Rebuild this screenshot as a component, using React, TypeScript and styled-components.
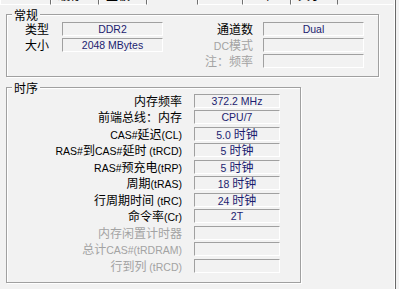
import { Fragment } from "react";
import styled, { createGlobalStyle } from "styled-components";

const GlobalStyle = createGlobalStyle`
  html, body {
    margin: 0;
    padding: 0;
    background: #f2f2f2;
  }
  body {
    font-family: "Liberation Sans", "Noto Sans CJK SC", sans-serif;
    font-size: 12px;
    color: #000;
  }
`;

const Window = styled.div`
  width: 396px;
  height: 289px;
  box-sizing: border-box;
  border-right: 1px solid #696969;
  box-shadow: inset -1px 0 0 #fff;
  display: flex;
  flex-direction: column;
  overflow: hidden;
`;

const TabStrip = styled.div`
  display: flex;
  height: 5px;
  flex: none;
  overflow: hidden;
  margin-right: 2px;
`;

const Tab = styled.div<{ $w: number; $active?: boolean }>`
  width: ${(p) => p.$w}px;
  flex: none;
  box-sizing: border-box;
  border-left: 1px solid #fff;
  border-right: 1px solid #707070;
  border-bottom: 1px solid ${(p) => (p.$active ? "transparent" : "#fff")};
  overflow: hidden;
`;

const TabFill = styled.div`
  flex: 1;
  border-bottom: 1px solid #fff;
`;

// only the lower edge of the tab captions is left in view
const TabLabel = styled.span<{ $active?: boolean }>`
  display: block;
  padding-left: 6px;
  font-family: "Noto Sans CJK SC", sans-serif;
  font-size: 12px;
  line-height: 12px;
  margin-top: ${(p) => (p.$active ? -16 : -11)}px;
  white-space: nowrap;
`;

const Group = styled.fieldset<{ $w: number; $top: number; $bottom: number }>`
  margin: ${(p) => p.$top}px 0 0 6px;
  padding: 0 0 ${(p) => p.$bottom}px 0;
  width: ${(p) => p.$w}px;
  min-width: 0;
  box-sizing: border-box;
  border: 1px solid #a0a0a0;
  box-shadow: 1px 1px 0 #fff, inset 1px 1px 0 #fff;
  flex: none;
`;

const Legend = styled.legend`
  margin-left: 5px;
  padding: 0 2px;
  font-family: "Noto Sans CJK SC", sans-serif;
  font-size: 12px;
  line-height: 13px;
  background: #f2f2f2;
`;

const GeneralGrid = styled.div`
  display: grid;
  grid-template-columns: 55px 101px 100px 101px;
  grid-auto-rows: 14px;
  row-gap: 2px;
  padding-top: 1px;
`;

const TimingGrid = styled.div`
  display: grid;
  grid-template-columns: 187px 86px;
  grid-template-rows: repeat(5, 16px 17px) 16px;
  align-items: start;
`;

const Label = styled.div<{ $gap: number; $off?: boolean }>`
  padding-right: ${(p) => p.$gap}px;
  text-align: right;
  line-height: 14px;
  height: 14px;
  white-space: nowrap;
  color: ${(p) => (p.$off ? "#a3a3a3" : "#000")};
`;

const Field = styled.div`
  height: 14px;
  box-sizing: border-box;
  border-top: 1px solid #a0a0a0;
  border-left: 1px solid #a0a0a0;
  border-bottom: 1px solid #fff;
  border-right: 1px solid #fff;
  text-align: center;
  line-height: 12px;
  color: #1c1c70;
  white-space: nowrap;
  overflow: hidden;
`;

const Han = styled.span`
  font-family: "Noto Sans CJK SC", sans-serif;
  font-size: 12px;
`;

const Latin = styled.span`
  font-size: 10.5px;
`;

const CJK = /([\u3000-\u9fff\uff00-\uffef]+)/;

function Mixed({ text }: { text: string }) {
  return (
    <>
      {text
        .split(CJK)
        .filter(Boolean)
        .map((part, i) =>
          CJK.test(part) ? <Han key={i}>{part}</Han> : <Latin key={i}>{part}</Latin>
        )}
    </>
  );
}

const tabs = [
  { label: "CPU", w: 51 },
  { label: "缓存", w: 48 },
  { label: "主板", w: 48 },
  { label: "内存", w: 51, active: true },
  { label: "SPD", w: 45 },
  { label: "显卡", w: 48 },
  { label: "关于", w: 47 },
];

const general = [
  { l: "类型", v: "DDR2", r: "通道数", rv: "Dual" },
  { l: "大小", v: "2048 MBytes", r: "DC模式", rv: "", roff: true },
  { l: "", v: null, r: "注：频率", rv: "", roff: true },
];

const timings = [
  { l: "内存频率", v: "372.2 MHz" },
  { l: "前端总线：内存", v: "CPU/7" },
  { l: "CAS#延迟(CL)", v: "5.0 时钟" },
  { l: "RAS#到CAS#延时 (tRCD)", v: "5 时钟" },
  { l: "RAS#预充电(tRP)", v: "5 时钟" },
  { l: "周期(tRAS)", v: "18 时钟" },
  { l: "行周期时间 (tRC)", v: "24 时钟" },
  { l: "命令率(Cr)", v: "2T" },
  { l: "内存闲置计时器", v: "", off: true },
  { l: "总计CAS#(tRDRAM)", v: "", off: true },
  { l: "行到列 (tRCD)", v: "", off: true },
];

export default function App() {
  return (
    <>
      <GlobalStyle />
      <Window>
        <TabStrip>
          {tabs.map((t) => (
            <Tab key={t.label} $w={t.w} $active={t.active}>
              <TabLabel $active={t.active}>{t.label}</TabLabel>
            </Tab>
          ))}
          <TabFill />
        </TabStrip>

        <Group $w={373} $top={3} $bottom={8}>
          <Legend>常规</Legend>
          <GeneralGrid>
            {general.map((row, i) => (
              <Fragment key={i}>
                <Label $gap={13}>
                  <Mixed text={row.l} />
                </Label>
                {row.v === null ? (
                  <div />
                ) : (
                  <Field>
                    <Mixed text={row.v} />
                  </Field>
                )}
                <Label $gap={10} $off={row.roff}>
                  <Mixed text={row.r} />
                </Label>
                <Field>
                  <Mixed text={row.rv} />
                </Field>
              </Fragment>
            ))}
          </GeneralGrid>
        </Group>

        <Group $w={295} $top={4} $bottom={7}>
          <Legend>时序</Legend>
          <TimingGrid>
            {timings.map((row, i) => (
              <Fragment key={i}>
                <Label $gap={12} $off={row.off}>
                  <Mixed text={row.l} />
                </Label>
                <Field>
                  <Mixed text={row.v} />
                </Field>
              </Fragment>
            ))}
          </TimingGrid>
        </Group>
      </Window>
    </>
  );
}
